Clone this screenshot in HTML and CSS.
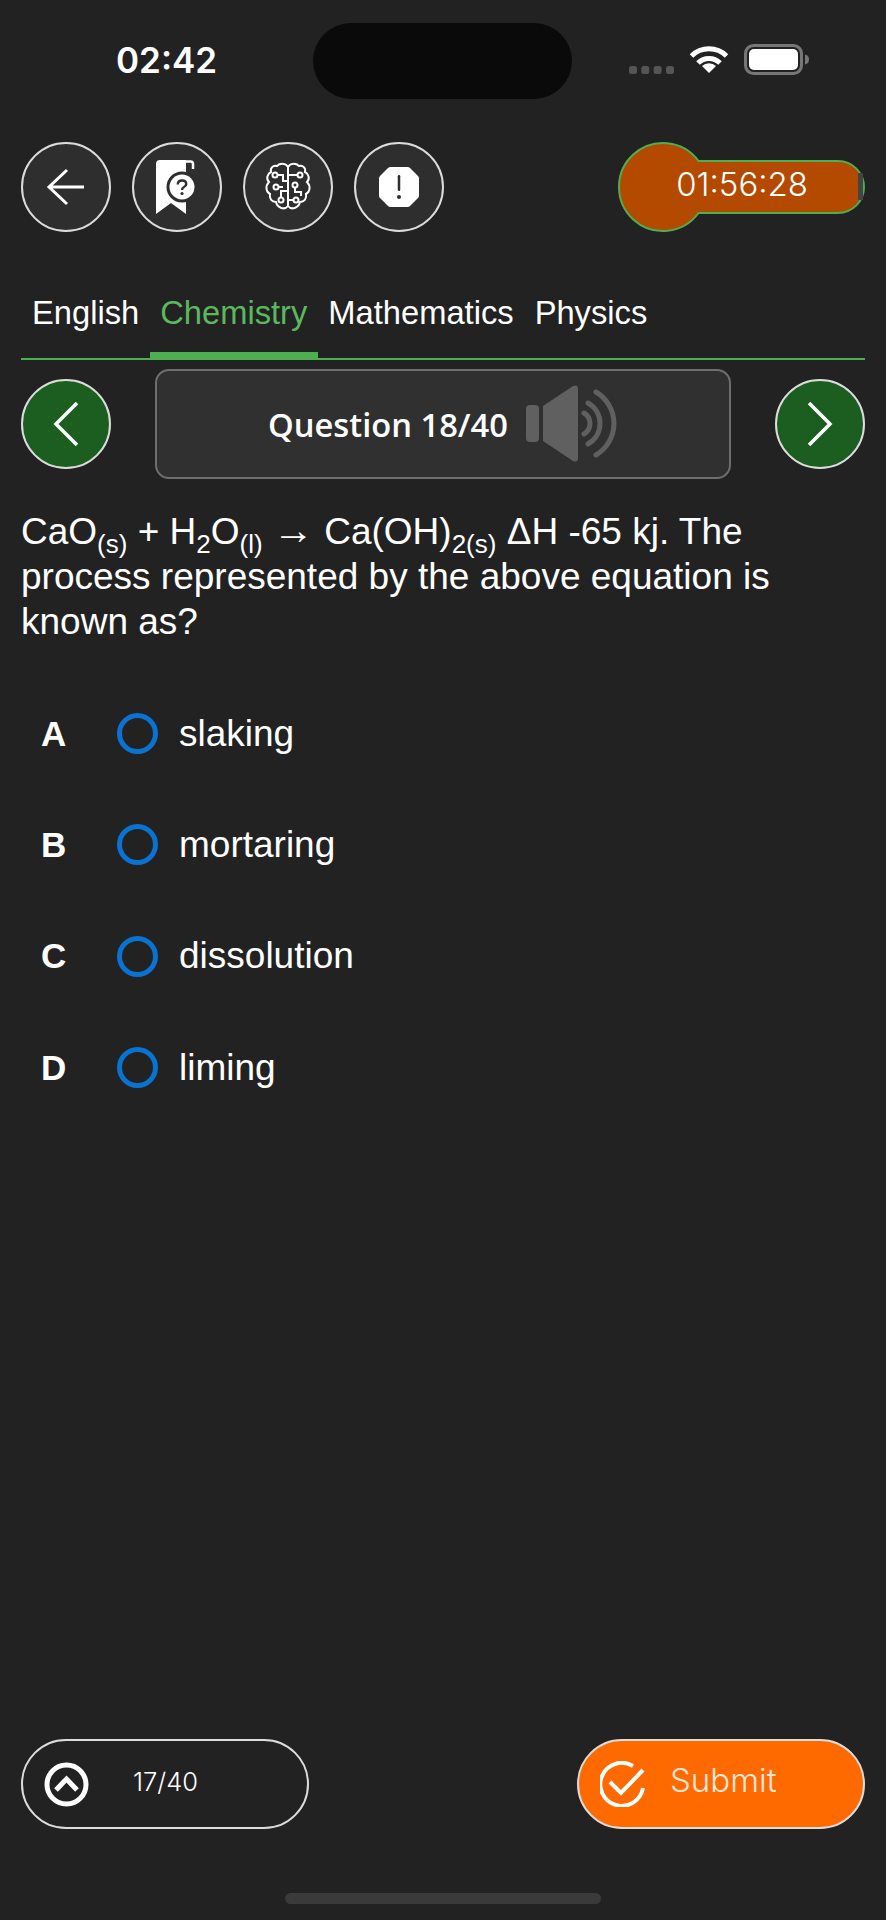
FILE: index.html
```html
<!DOCTYPE html>
<html lang="en">

<head>
    <meta charset="UTF-8">
    <meta name="viewport" content="width=device-width, initial-scale=1.0">
    <title>Question 18/40</title>
    <link rel="stylesheet" href="styles.css">
</head>

<body>
    <div class="screen">
        <!-- status bar -->
        <div class="status">
            <span class="status-time">02:42</span>
            <div class="island"></div>
            <div class="status-icons">
                <svg class="signal" width="45" height="8" viewBox="0 0 45 8">
                    <rect x="0" y="0" width="8" height="8" rx="2.5" />
                    <rect x="12.300" y="0" width="8" height="8" rx="2.5" />
                    <rect x="24.600" y="0" width="8" height="8" rx="2.5" />
                    <rect x="37" y="0" width="8" height="8" rx="2.5" />
                </svg>
                <svg class="wifi" width="40" height="28" viewBox="0 0 40 28">
                    <path d="M20 28 L13 21 A10 10 0 0 1 27 21 Z" fill="#fff" />
                    <path d="M9 18 A15.500 15.500 0 0 1 31 18" fill="none" stroke="#fff" stroke-width="5" />
                    <path d="M2.500 11 A25 25 0 0 1 37.500 11" fill="none" stroke="#fff" stroke-width="5" />
                </svg>
                <svg class="battery" width="65" height="31" viewBox="0 0 65 31">
                    <rect x="1.500" y="1.500" width="56" height="28" rx="8" fill="none" stroke="#777" stroke-width="3" />
                    <rect x="5" y="5" width="49" height="21" rx="5" fill="#fff" />
                    <path d="M61 10.500 C64 11 65 13 65 15.500 C65 18 64 20 61 20.500 Z" fill="#777" />
                </svg>
            </div>
        </div>

        <!-- toolbar -->
        <div class="toolbar">
            <button class="round-btn">
                <svg width="40" height="38" viewBox="0 0 40 38" fill="none" stroke="#fff" stroke-width="3">
                    <path d="M38 19 H3 M21 2 L3 19 L21 36" />
                </svg>
            </button>
            <button class="round-btn">
                <svg width="44" height="56" viewBox="0 0 44 56">
                    <path d="M1 5 Q1 1 5 1 H31 V55 L16 44 L1 55 Z" fill="#fff" />
                    <path d="M30 2.500 H35.500 Q38 2.500 38 5 V10" fill="none" stroke="#fff" stroke-width="2.500" />
                    <circle cx="27" cy="28" r="15.500" fill="#2e2e2e" />
                    <circle cx="27" cy="28" r="12.500" fill="#fff" />
                    <path d="M22.800 25.500 Q22.800 21.500 27 21.500 Q31.200 21.500 31.200 25 Q31.200 27 29 28 Q27 29 27 31" fill="none" stroke="#2e2e2e" stroke-width="2.400" />
                    <circle cx="27" cy="34.500" r="1.600" fill="#2e2e2e" />
                </svg>
            </button>
            <button class="round-btn">
                <svg width="46" height="50" viewBox="0 0 46 50" fill="none" stroke="#fff" stroke-width="2">
                    <path d="M23 5 C21 1 15 1 12 4 C8 3 5 6 6 10 C2 12 1 17 4 20 C0 24 1 30 5 32 C4 37 7 40 11 40 C12 45 19 49 23 44" />
                    <path d="M23 5 C25 1 31 1 34 4 C38 3 41 6 40 10 C44 12 45 17 42 20 C46 24 45 30 41 32 C42 37 39 40 35 40 C34 45 27 49 23 44 Z" />
                    <circle cx="10" cy="13" r="2.500" />
                    <path d="M12.500 13 H18 V19 H23" />
                    <circle cx="11" cy="25" r="2.500" />
                    <path d="M13.500 25 H18" />
                    <circle cx="16" cy="38" r="2.500" />
                    <path d="M16 35.500 V29 H23" />
                    <circle cx="35" cy="13" r="2.500" />
                    <path d="M32.500 13 H23" />
                    <circle cx="30" cy="23" r="2.500" />
                    <path d="M30 25.500 V30 H36 V34" />
                    <circle cx="31" cy="38" r="2.500" />
                    <path d="M28.500 38 H23" />
                </svg>
            </button>
            <button class="round-btn">
                <svg width="42" height="42" viewBox="0 0 42 42">
                    <path d="M12.500 1 H29.500 Q31 1 32 2 L40 10 Q41 11 41 12.500 V29.500 Q41 31 40 32 L32 40 Q31 41 29.500 41 H12.500 Q11 41 10 40 L2 32 Q1 31 1 29.500 V12.500 Q1 11 2 10 L10 2 Q11 1 12.500 1 Z" fill="#fff" />
                    <rect x="19.750" y="9" width="2.500" height="16" rx="1.250" fill="#2e2e2e" />
                    <circle cx="21" cy="31" r="2" fill="#2e2e2e" />
                </svg>
            </button>
            <div class="timer">
                <svg class="timer-shape" width="250" height="92" viewBox="0 0 250 92">
                    <path d="M81.500 20 H221 A26 26 0 0 1 221 72 H81.500 A44 44 0 1 1 81.500 20 Z" fill="#b34a00" stroke="#4caf50" stroke-width="2" />
                    <rect x="241" y="32" width="5" height="27" fill="#444" />
                </svg>
                <span class="timer-text">01:56:28</span>
            </div>
        </div>

        <!-- subject tabs -->
        <div class="tabs">
            <div class="tab">English</div>
            <div class="tab active">Chemistry</div>
            <div class="tab">Mathematics</div>
            <div class="tab">Physics</div>
        </div>

        <!-- question nav -->
        <div class="qnav">
            <button class="round-btn green">
                <svg width="26" height="44" viewBox="0 0 26 44" fill="none" stroke="#fff" stroke-width="3.500">
                    <path d="M24 1 L3 22 L24 43" />
                </svg>
            </button>
            <div class="qbox">
                <span class="qbox-text">Question 18/40</span>
                <svg width="92" height="78" viewBox="0 0 92 78">
                    <rect x="0" y="20" width="13" height="37" rx="4" fill="#606060" />
                    <path d="M17 21 L47 1 Q52 -1 52 4 V73 Q52 78 47 76 L17 56 Z" fill="#606060" />
                    <g fill="none" stroke="#606060" stroke-width="5" stroke-linecap="round">
                        <path d="M58 28 A12.200 12.200 0 0 1 58 49" />
                        <path d="M62 18 A23.500 23.500 0 0 1 62 59" />
                        <path d="M70 7 A36.600 36.600 0 0 1 70 70" />
                    </g>
                </svg>
            </div>
            <button class="round-btn green">
                <svg width="26" height="44" viewBox="0 0 26 44" fill="none" stroke="#fff" stroke-width="3.500">
                    <path d="M2 1 L23 22 L2 43" />
                </svg>
            </button>
        </div>

        <!-- question -->
        <div class="question">CaO<sub>(s)</sub> + H<sub>2</sub>O<sub>(l)</sub> <span class="arrow">→</span> Ca(OH)<sub>2(s)</sub> ΔH -65 kj. The process represented by the above equation is known as?</div>

        <div class="options">
            <div class="option"><span class="letter">A</span><span class="radio"></span><span class="option-text">slaking</span></div>
            <div class="option"><span class="letter">B</span><span class="radio"></span><span class="option-text">mortaring</span></div>
            <div class="option"><span class="letter">C</span><span class="radio"></span><span class="option-text">dissolution</span></div>
            <div class="option"><span class="letter">D</span><span class="radio"></span><span class="option-text">liming</span></div>
        </div>

        <!-- bottom buttons -->
        <div class="bottom">
            <button class="pill">
                <svg width="45" height="45" viewBox="0 0 45 45" fill="none" stroke="#fff">
                    <circle cx="22.500" cy="22.500" r="19.500" stroke-width="5" />
                    <path d="M12 28 L22.500 17 L33 28" stroke-width="5" />
                </svg>
                <span class="pill-count">17/40</span>
            </button>
            <button class="pill submit">
                <svg width="46" height="46" viewBox="0 0 46 46" fill="none" stroke="#fff" stroke-width="4">
                    <path d="M33 5 A21.500 21.500 0 1 0 43 27" />
                    <path d="M10 21 L21 32 L43 9" />
                </svg>
                <span class="pill-submit">Submit</span>
            </button>
        </div>

        <div class="home-bar"></div>
    </div>
</body>

</html>
```

FILE: styles.css
```css
* {
    padding: 0;
    margin: 0;
    box-sizing: border-box;
}

body {
    background-color: #222222;
    font-family: "Liberation Sans", Arial, sans-serif;
    color: #fff;
}

button {
    font-family: inherit;
    color: inherit;
}

.screen {
    width: 886px;
    height: 1920px;
    display: flex;
    flex-direction: column;
    padding: 0 21px;
    overflow: hidden;
}

/* status bar */
.status {
    height: 142px;
    padding-top: 23px;
    display: flex;
    align-items: flex-start;
}

.status-time {
    width: 292px;
    padding: 13px 0 0 95px;
    font-family: Inter, sans-serif;
    font-size: 35px;
    font-weight: 600;
    line-height: 48px;
}

.island {
    width: 259px;
    height: 76px;
    border-radius: 38px;
    background-color: #0a0a0a;
}

.status-icons {
    display: flex;
    align-items: flex-start;
    padding: 22px 0 0 57px;
}

.signal {
    margin: 21px 15px 0 0;
    fill: #555;
}

.wifi {
    margin-right: 15px;
}

.battery {
    margin-top: -1px;
}

/* toolbar */
.toolbar {
    display: flex;
    gap: 21px;
    align-items: center;
}

.round-btn {
    width: 90px;
    height: 90px;
    flex: none;
    border: 2.5px solid #dcdcdc;
    border-radius: 50%;
    background-color: #2e2e2e;
    display: flex;
    align-items: center;
    justify-content: center;
}

.round-btn.green {
    background-color: #1b5e20;
}

.timer {
    position: relative;
    width: 248px;
    height: 90px;
    margin-left: auto;
    display: flex;
    align-items: center;
    justify-content: flex-end;
    padding: 0 57px 6px 0;
}

.timer-shape {
    position: absolute;
    left: 0;
    top: -1px;
}

.timer-text {
    position: relative;
    font-family: Inter, sans-serif;
    font-size: 33px;
    font-weight: 300;
}

/* tabs */
.tabs {
    display: flex;
    margin-top: 53px;
    height: 75px;
    border-bottom: 2px solid #4caf50;
}

.tab {
    height: 75px;
    padding: 9px 10.500px 0;
    font-size: 32.700px;
    line-height: 38px;
    white-space: nowrap;
}

.tab:first-child {
    padding-left: 11px;
}

.tab.active {
    color: #5cb85f;
    border-bottom: 8px solid #4caf50;
}

/* question nav */
.qnav {
    display: flex;
    justify-content: space-between;
    align-items: center;
    height: 110px;
    margin-top: 9px;
}

.qbox {
    width: 576px;
    height: 110px;
    border: 2.5px solid #6e6e6e;
    border-radius: 14px;
    background-color: #303030;
    display: flex;
    align-items: center;
    justify-content: center;
    gap: 18px;
}

.qbox-text {
    font-family: "Open Sans", sans-serif;
    font-size: 32.700px;
    font-weight: 600;
}

/* question */
.question {
    margin-top: 30px;
    font-size: 37px;
    line-height: 45px;
}

.question sub {
    font-size: 26px;
    line-height: 0;
    vertical-align: -9px;
}

.arrow {
    font-size: 41px;
    line-height: 0;
}

/* options */
.options {
    margin-top: 34px;
}

.option {
    height: 111.300px;
    display: flex;
    align-items: center;
    padding-left: 20px;
}

.letter {
    width: 76px;
    font-size: 35px;
    font-weight: 700;
}

.radio {
    width: 41px;
    height: 41px;
    border: 5px solid #0a72d1;
    border-radius: 50%;
    flex: none;
}

.option-text {
    margin-left: 21px;
    font-size: 37px;
}

/* bottom */
.bottom {
    display: flex;
    justify-content: space-between;
    margin-top: auto;
}

.pill {
    width: 288px;
    height: 90px;
    border: 2.5px solid #dcdcdc;
    border-radius: 45px;
    background-color: transparent;
    display: flex;
    align-items: center;
    padding-left: 21px;
}

.pill.submit {
    background-color: #ff6a00;
}

.pill-count {
    margin-left: 44px;
    font-family: Inter, sans-serif;
    font-size: 25.500px;
    font-weight: 300;
    margin-top: -6px;
}

.pill-submit {
    margin-left: 24px;
    font-family: Inter, sans-serif;
    font-size: 33px;
    font-weight: 300;
    color: #f6e6da;
    margin-top: -8px;
}

.home-bar {
    width: 316px;
    height: 11px;
    margin: 64px auto 16px;
    border-radius: 6px;
    background-color: #3a3a3a;
}
```
